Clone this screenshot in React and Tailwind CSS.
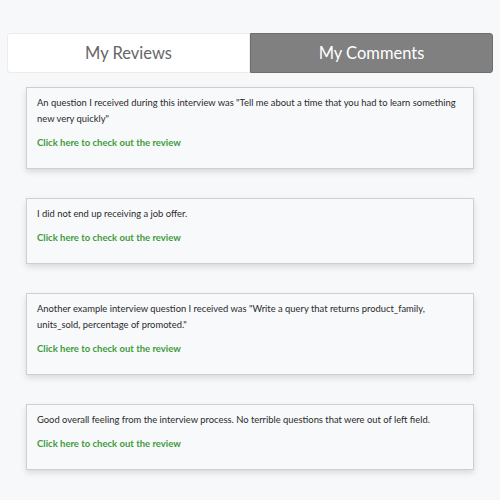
import React, { useState } from 'react';

const comments = [
  'An question I received during this interview was "Tell me about a time that you had to learn something new very quickly"',
  'I did not end up receiving a job offer.',
  'Another example interview question I received was "Write a query that returns product_family, units_sold, percentage of promoted."',
  'Good overall feeling from the interview process. No terrible questions that were out of left field.',
];

function App() {
  const [tab, setTab] = useState('comments');

  return (
    <div className="min-h-[500px] bg-[#f7f8fa] pt-[33px] font-['Lato','Liberation_Sans',sans-serif]">
      {/* Tabs */}
      <div className="mx-[7px] flex h-[40px]">
        <button
          onClick={() => setTab('reviews')}
          className={`flex-1 rounded-l-[3px] border text-[16.5px] ${
            tab === 'reviews'
              ? 'border-[#6e6e6e] bg-[#808080] text-white'
              : 'border-[#ececec] bg-white text-[#666]'
          }`}
        >
          My Reviews
        </button>
        <button
          onClick={() => setTab('comments')}
          className={`flex-1 rounded-r-[3px] border text-[16.5px] ${
            tab === 'comments'
              ? 'border-[#6e6e6e] bg-[#808080] text-white'
              : 'border-[#ececec] bg-white text-[#666]'
          }`}
        >
          My Comments
        </button>
      </div>

      {/* Comment cards */}
      <div className="mx-[26px] mt-[14px] flex flex-col gap-[29px] pb-[30px]">
        {comments.map((text, i) => (
          <div
            key={i}
            className="border border-[#cfcfd2] bg-[#f8f9fb] px-[10px] pt-[7px] pb-[17px] shadow-[0_3px_6px_rgba(0,0,0,0.12)]"
          >
            <p className="text-[9.4px] leading-[16px] text-[#2a2a2a]">{text}</p>
            <a href="#" className="mt-[8px] block text-[9.5px] font-bold leading-[16px] text-[#3e9b3a]">
              Click here to check out the review
            </a>
          </div>
        ))}
      </div>
    </div>
  );
}

export default App;
